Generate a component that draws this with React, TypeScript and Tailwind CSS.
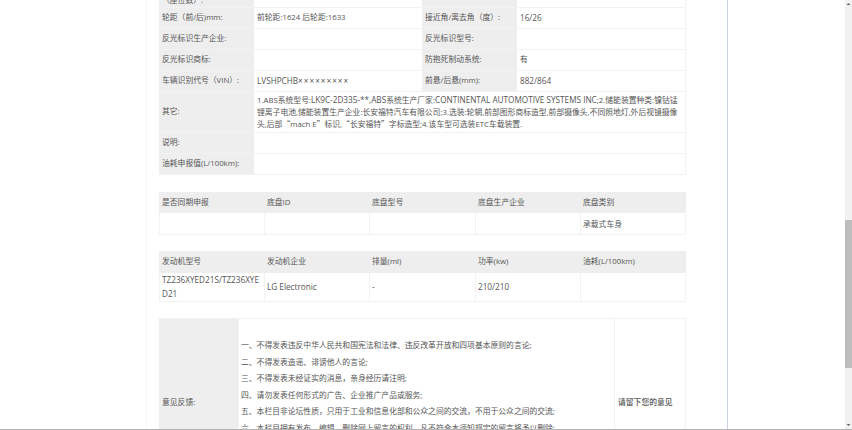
const cjk = "font-['Open_Sans','Noto_Sans_CJK_SC',sans-serif]"
const cols5 = 'grid-cols-[105px_105px_106px_105px_106px]'
const quote = "font-['Noto_Sans_CJK_SC',sans-serif]"

const specRows = [
  { a: '轮距（前/后)mm:', b: '前轮距:1624 后轮距:1633', c: '接近角/离去角（度）:', d: '16/26' },
  { a: '反光标识生产企业:', b: '', c: '反光标识型号:', d: '' },
  { a: '反光标识商标:', b: '', c: '防抱死制动系统:', d: '有' },
  { a: '车辆识别代号（VIN）:', b: 'LVSHPCHB', c: '前悬/后悬(mm):', d: '882/864' },
]

const rules = [
  '一、不得发表违反中华人民共和国宪法和法律、违反改革开放和四项基本原则的言论;',
  '二、不得发表造谣、诽谤他人的言论;',
  '三、不得发表未经证实的消息，亲身经历请注明;',
  '四、请勿发表任何形式的广告、企业推广产品或服务;',
  '五、本栏目非论坛性质，只用于工业和信息化部和公众之间的交流，不用于公众之间的交流;',
  '六、本栏目拥有发布、编辑、删除网上留言的权利，凡不符合本须知规定的留言将予以删除;',
]

// latin text needs a slightly larger size than the cjk text to match
const isLatin = (s: string) => /^[\x00-\x7f]+$/.test(s)

function Label({ children, className = '' }: { children?: React.ReactNode; className?: string }) {
  return <div className={`flex items-center bg-[#eeeeee] pl-[3px] ${className}`}>{children}</div>
}

function SimpleTable({ head, cells, headClass, rowClass }: { head: string[]; cells: string[]; headClass: string; rowClass: string }) {
  return (
    <div className="border-b border-[#f2f2f2]">
      <div className={`grid bg-[#eeeeee] ${cols5} ${headClass}`}>
        {head.map((h) => (
          <div key={h} className="flex items-center pl-[3px]">{h}</div>
        ))}
      </div>
      <div className={`grid border-r border-[#f2f2f2] ${cols5} ${rowClass}`}>
        {cells.map((c, i) => (
          <div
            key={i}
            className={`flex items-center border-l border-[#f2f2f2] pr-[3px] pl-[2px] leading-[14px] break-all ${isLatin(c) ? 'text-[8.2px]' : ''}`}
          >
            {c}
          </div>
        ))}
      </div>
    </div>
  )
}

export default function App() {
  return (
    <div className={`relative flex h-[430px] w-[852px] overflow-hidden bg-white text-[7.8px] text-[#555555] ${cjk}`}>
      <div className="ml-[146px] h-full w-[582px] border-x border-r-[#c9d3e4] border-l-[#f4f6fa] pl-[12px]">
        <div className="w-[527px]">
          {/* spec table */}
          <div className="border-r border-[#f2f2f2]">
            <div className="grid h-[8px] grid-cols-[95px_168px_95px_169px] overflow-hidden border-b border-[#f2f2f2]">
              <Label className="items-end">
                <span className="-translate-y-[5px]">（座位数）:</span>
              </Label>
              <div />
              <Label />
              <div />
            </div>
            {specRows.map((r) => (
              <div key={r.a} className="grid h-[21px] grid-cols-[95px_168px_95px_169px] border-b border-[#f2f2f2]">
                <Label>{r.a}</Label>
                <div className={`flex items-center pl-[3px] ${isLatin(r.b) ? 'text-[8.2px]' : ''}`}>
                  {r.b}
                  {r.b === 'LVSHPCHB' && <span className="tracking-[1px]">×××××××××</span>}
                </div>
                <Label>{r.c}</Label>
                <div className={`flex items-center pl-[3px] ${isLatin(r.d) ? 'text-[8.2px]' : ''}`}>{r.d}</div>
              </div>
            ))}
            <div className="grid h-[41px] grid-cols-[95px_432px] border-b border-[#f2f2f2]">
              <Label>其它:</Label>
              <div className="self-center pl-[3px] leading-[12px] whitespace-nowrap">
                1.ABS系统型号:<span className="text-[8.2px]">LK9C-2D335-**,ABS</span>系统生产厂家:<span className="text-[8.2px]">CONTINENTAL AUTOMOTIVE SYSTEMS INC</span>;2.储能装置种类:镍钴锰
                <br />
                锂离子电池,储能装置生产企业:长安福特汽车有限公司;3.选装:轮辋,前部图形商标造型,前部摄像头,不同照地灯,外后视镜摄像
                <br />
                头,后部<span className={quote}>“</span>mach E<span className={quote}>”</span>标识,<span className={quote}>“</span>长安福特<span className={quote}>”</span>字标造型;4.该车型可选装ETC车载装置.
              </div>
            </div>
            <div className="grid h-[21px] grid-cols-[95px_432px] border-b border-[#f2f2f2]">
              <Label>说明:</Label>
              <div />
            </div>
            <div className="grid h-[21px] grid-cols-[95px_432px] border-b border-[#f2f2f2]">
              <Label>油耗申报值(L/100km):</Label>
              <div />
            </div>
          </div>

          <div className="mt-[17px]">
            <SimpleTable
              head={['是否同期申报', '底盘ID', '底盘型号', '底盘生产企业', '底盘类别']}
              cells={['', '', '', '', '承载式车身']}
              headClass="h-[21px]"
              rowClass="h-[21px]"
            />
          </div>

          <div className="mt-[16px]">
            <SimpleTable
              head={['发动机型号', '发动机企业', '排量(ml)', '功率(kw)', '油耗(L/100km)']}
              cells={['TZ236XYED21S/TZ236XYED21', 'LG Electronic', '-', '210/210', '']}
              headClass="h-[22px]"
              rowClass="h-[28px]"
            />
          </div>

          {/* feedback */}
          <div className="mt-[16px] grid h-[112px] grid-cols-[79px_377px_71px] overflow-hidden border-t border-[#f2f2f2]">
            <Label className="h-[167px]">意见反馈:</Label>
            <div className="flex flex-col border-x border-[#f2f2f2] pt-[18px] pl-[2px] leading-[16.5px]">
              {rules.map((r) => (
                <div key={r} className="whitespace-nowrap">{r}</div>
              ))}
            </div>
            <div className="flex h-[167px] items-center border-r border-[#f2f2f2] pl-[3px] font-medium">
              请留下您的意见
            </div>
          </div>
        </div>
      </div>

      {/* browser scrollbar */}
      <div className="absolute top-0 right-0 flex h-full w-[7px] flex-col bg-[#f1f1f1]">
        <svg viewBox="0 0 7 8" className="h-[8px] w-[7px]">
          <path d="M1.5 5 L3.5 3 L5.5 5 Z" fill="#666666" />
        </svg>
        <div className="mt-[212px] h-[148px] bg-[#bdbdbd]" />
        <svg viewBox="0 0 7 8" className="mt-auto mb-[1px] h-[8px] w-[7px]">
          <path d="M1.5 3 L3.5 5 L5.5 3 Z" fill="#666666" />
        </svg>
      </div>
      <div className="absolute right-0 bottom-0 left-0 h-px bg-[#b5b5b5]" />
    </div>
  )
}
